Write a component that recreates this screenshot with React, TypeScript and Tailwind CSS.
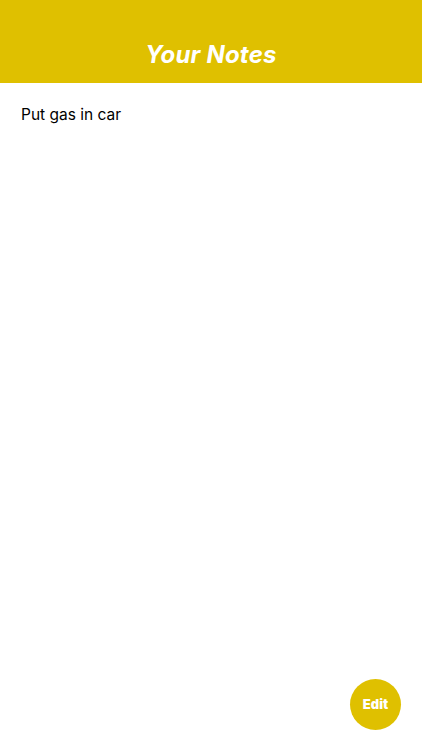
import React from "react";

export default function App() {
  return (
    <div className="relative w-[422px] h-[750px] bg-white overflow-hidden" style={{ fontFamily: "Inter, 'Liberation Sans', sans-serif" }}>
      <div className="h-[83px] bg-[#dfc000] flex items-end justify-center pb-[11px]">
        <h1 className="text-white italic font-bold text-[24px] leading-[34px] tracking-[0.2px]">Your Notes</h1>
      </div>
      <div className="px-[21px] pt-[21px]">
        <p className="text-[15.5px] leading-[22px] text-black">Put gas in car</p>
      </div>
      <button className="absolute left-[350px] top-[679px] w-[51px] h-[51px] rounded-full bg-[#dfc000] flex items-center justify-center text-white font-black text-[13px]">
        Edit
      </button>
    </div>
  );
}
